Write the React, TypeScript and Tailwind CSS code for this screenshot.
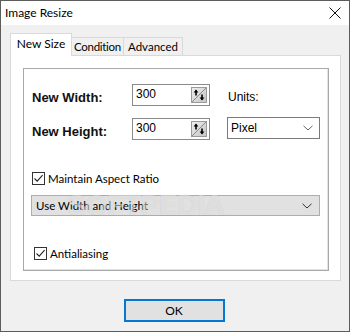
import React from "react";

function Check() {
  return (
    <span className="flex h-[13px] w-[13px] items-center justify-center border border-[#333] bg-white">
      <svg width="11" height="11" viewBox="0 0 11 11">
        <path d="M1.5 5.5 L4.2 8.2 L9.6 2.2" fill="none" stroke="#222" strokeWidth="1.1" />
      </svg>
    </span>
  );
}

function Chevron({ color = "#555" }: { color?: string }) {
  return (
    <svg width="10" height="6" viewBox="0 0 10 6">
      <path d="M0.5 0.8 L5 5 L9.5 0.8" fill="none" stroke={color} strokeWidth="1" />
    </svg>
  );
}

function Spin() {
  return (
    <svg width="16" height="16" viewBox="0 0 16 16" className="absolute right-[2px] top-[2px]">
      <defs>
        <linearGradient id="sg" x1="0" y1="0" x2="1" y2="1">
          <stop offset="0" stopColor="#f0f0f0" />
          <stop offset="1" stopColor="#c4c4c4" />
        </linearGradient>
      </defs>
      <rect x="0.5" y="0.5" width="15" height="15" fill="url(#sg)" stroke="#9a9a9a" />
      <path d="M1 15 L15 1" stroke="#8a8a8a" strokeWidth="1" />
      <path d="M5 3.5 V8.5" stroke="#000" strokeWidth="1.6" />
      <path d="M2.6 5.6 L5 2.6 L7.4 5.6 Z" fill="#000" />
      <path d="M11 7.5 V12.5" stroke="#000" strokeWidth="1.6" />
      <path d="M8.6 10.4 L11 13.4 L13.4 10.4 Z" fill="#000" />
    </svg>
  );
}

function NumBox({ value }: { value: string }) {
  return (
    <div className="relative h-[22px] w-[78px] border border-[#8a8a8a] bg-white pl-[3px] font-['Liberation_Sans',sans-serif] text-[12px] leading-[19px] text-black">
      {value}
      <Spin />
    </div>
  );
}

export default function App() {
  return (
    <div className="relative flex h-[332px] w-[350px] flex-col border border-[#5c5c5c] bg-[#f0f0f0] font-['Lato',sans-serif] text-[11.5px] text-black">
      {/* Title bar */}
      <div className="flex h-[24px] items-center justify-between bg-white pl-[4px] pr-[8px]">
        <span className="text-[12px] leading-none">Image Resize</span>
        <svg width="12" height="12" viewBox="0 0 12 12">
          <path d="M0.5 0.5 L11.5 11.5 M11.5 0.5 L0.5 11.5" stroke="#111" strokeWidth="1" />
        </svg>
      </div>

      {/* Tabs */}
      <div className="ml-[9px] mt-[8px] flex h-[22px] items-end text-[11.5px]">
        <div className="relative z-10 mb-[-1px] flex h-[23px] w-[62px] items-center justify-center border border-b-0 border-[#d9d9d9] bg-white pb-[2px] text-[12px]">
          New Size
        </div>
        <div className="flex h-[18px] w-[52px] items-center justify-center border border-b-0 border-l-0 border-[#d9d9d9] tracking-[-0.3px]">
          Condition
        </div>
        <div className="flex h-[18px] w-[59px] items-center justify-center border border-b-0 border-l-0 border-[#d9d9d9]">
          Advanced
        </div>
      </div>

      {/* Panel */}
      <div className="ml-[9px] h-[226px] w-[331px] border border-[#d9d9d9] bg-white pl-[12px] pt-[12px]">
        <div className="flex h-[203px] w-[306px] flex-col border border-[#a9a9a9] shadow-[inset_-1px_-1px_0_#e3e3e3]">
          <div className="ml-[8px] mt-[15px] flex h-[22px] items-end">
            <span className="w-[100px] font-['Liberation_Sans',sans-serif] text-[13px] font-bold leading-[16px] text-[#111]">
              New Width:
            </span>
            <NumBox value="300" />
            <span className="ml-[18px] font-['Liberation_Sans',sans-serif] text-[12px] leading-[18px]">Units:</span>
          </div>
          <div className="ml-[8px] mt-[12px] flex h-[22px] items-end">
            <span className="w-[100px] font-['Liberation_Sans',sans-serif] text-[13px] font-bold leading-[16px] text-[#111]">
              New Height:
            </span>
            <NumBox value="300" />
            <div className="mb-[1px] ml-[17px] flex h-[22px] w-[93px] items-center justify-between border border-[#7a7a7a] bg-white pl-[3px] pr-[6px] font-['Liberation_Sans',sans-serif] text-[12px]">
              <span>Pixel</span>
              <Chevron color="#666" />
            </div>
          </div>
          <div className="ml-[8px] mt-[32px] flex items-center gap-[3px]">
            <Check />
            <span className="leading-[13px]">Maintain Aspect Ratio</span>
          </div>
          <div className="ml-[7px] mt-[10px] flex h-[21px] w-[289px] items-center justify-between border border-[#adadad] bg-[#e1e1e1] pl-[4px] pr-[7px]">
            <span>Use Width and Height</span>
            <Chevron color="#333" />
          </div>
          <div className="ml-[10px] mt-[31px] flex items-center gap-[3px]">
            <Check />
            <span className="leading-[13px]">Antialiasing</span>
          </div>
        </div>
      </div>

      {/* Footer */}
      <div className="mt-[18px] flex justify-center pr-[2px]">
        <button className="h-[23px] w-[101px] border-2 border-[#0078d7] bg-[#e1e1e1] text-[12px] leading-none">
          OK
        </button>
      </div>

      {/* Watermark */}
      <div className="pointer-events-none absolute left-[66px] top-[183px] font-['Liberation_Sans',sans-serif] text-[29px] font-bold tracking-[-1px] text-white/50 [text-shadow:0_0_1px_rgba(0,0,0,0.16)]">
        SOFTPEDIA
      </div>
    </div>
  );
}
